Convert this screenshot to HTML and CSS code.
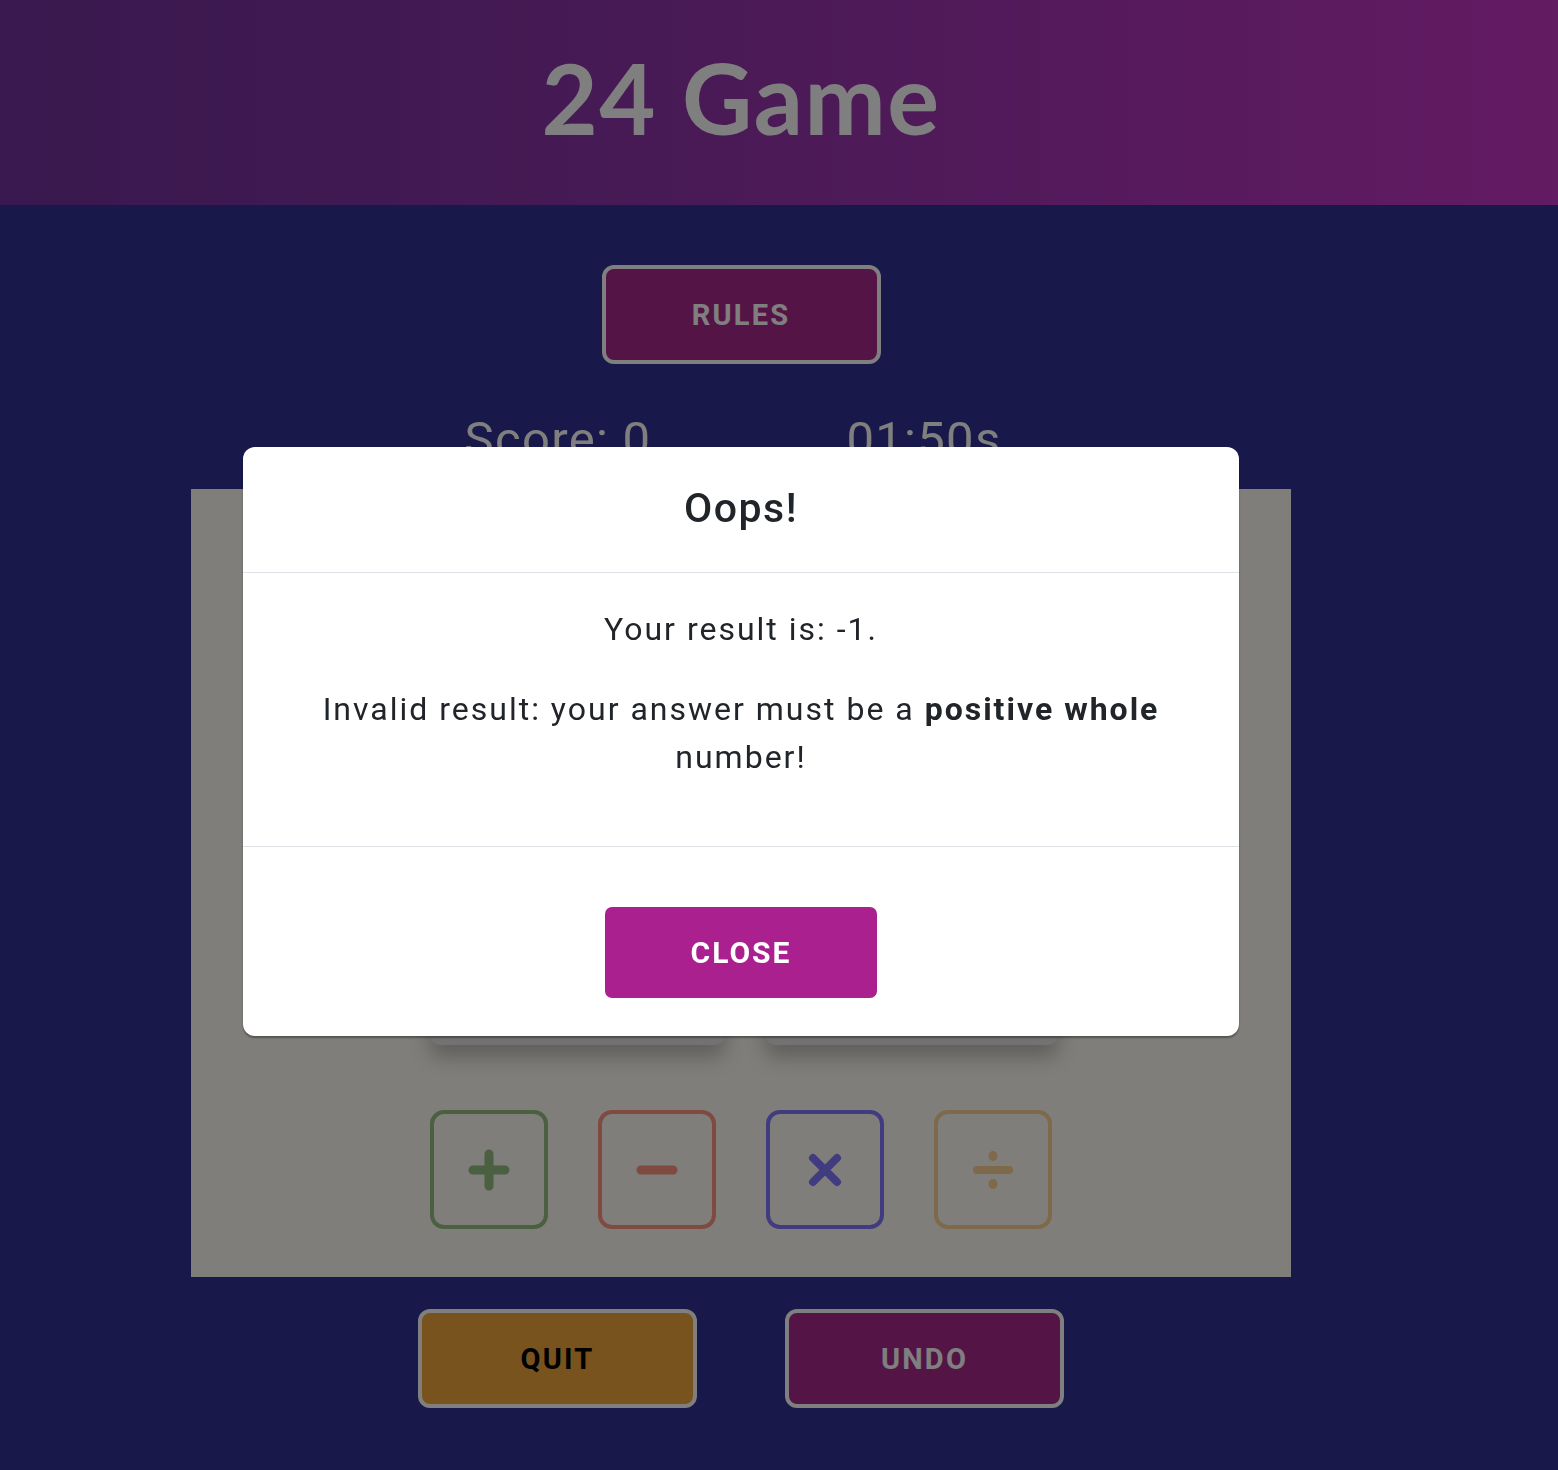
FILE: index.html
```html
<!DOCTYPE html>
<html lang="en">
<head>
<meta charset="utf-8">
<title>24 Game</title>
<link rel="stylesheet" href="styles.css">
</head>
<body>
<header class="site-header">
  <div class="page">
    <h1 class="title">24 Game</h1>
  </div>
</header>
<main class="page main">
  <button class="btn btn-outline btn-rules">RULES</button>
  <div class="stats">
    <div class="stat">Score: 0</div>
    <div class="stat">01:50s</div>
  </div>
  <section class="board">
    <div class="cards">
      <div class="card"></div>
      <div class="card"></div>
      <div class="card"></div>
      <div class="card"></div>
    </div>
    <div class="ops">
      <button class="op op-plus" aria-label="add">
        <svg width="44" height="44" viewBox="0 0 44 44"><path d="M22 6V38M6 22H38" stroke="currentColor" stroke-width="9" stroke-linecap="round"/></svg>
      </button>
      <button class="op op-minus" aria-label="subtract">
        <svg width="44" height="44" viewBox="0 0 44 44"><path d="M6 22H38" stroke="currentColor" stroke-width="9" stroke-linecap="round"/></svg>
      </button>
      <button class="op op-times" aria-label="multiply">
        <svg width="44" height="44" viewBox="0 0 44 44"><path d="M10 10L34 34M34 10L10 34" stroke="currentColor" stroke-width="8" stroke-linecap="round"/></svg>
      </button>
      <button class="op op-div" aria-label="divide">
        <svg width="44" height="44" viewBox="0 0 44 44"><path d="M6 22H38" stroke="currentColor" stroke-width="8" stroke-linecap="round"/><ellipse cx="22" cy="8" rx="4.5" ry="5" fill="currentColor"/><ellipse cx="22" cy="36" rx="4.5" ry="5" fill="currentColor"/></svg>
      </button>
    </div>
  </section>
  <div class="actions">
    <button class="btn btn-outline btn-quit">QUIT</button>
    <button class="btn btn-outline btn-undo">UNDO</button>
  </div>
</main>

<div class="backdrop"></div>
<div class="modal" role="dialog">
  <div class="modal-header"><h2 class="modal-title">Oops!</h2></div>
  <div class="modal-body">
    <p>Your result is: -1.</p>
    <p>Invalid result: your answer must be a <strong>positive whole</strong> number!</p>
  </div>
  <div class="modal-footer">
    <button class="btn-close">CLOSE</button>
  </div>
</div>
</body>
</html>
```
FILE: styles.css
```css
* { box-sizing: border-box; }
html, body { margin: 0; padding: 0; }
body {
  background: #303094;
  font-family: Roboto, "Liberation Sans", sans-serif;
  min-height: 1470px;
  overflow: hidden;
}
.page { width: 1482px; }
.site-header {
  height: 205px;
  background: linear-gradient(90deg, #72329e 0%, #8a34a8 35%, #c636c4 100%);
}
.site-header .page {
  height: 100%;
  display: flex;
  align-items: center;
  justify-content: center;
}
.title {
  margin: 0;
  font-family: Lato, "Open Sans", sans-serif;
  font-weight: 700;
  font-size: 97px;
  color: #fff;
  letter-spacing: 1.5px;
  line-height: 1;
  margin-top: -10px;
}
.main {
  display: flex;
  flex-direction: column;
  align-items: center;
  padding-top: 60px;
}
.btn {
  font-family: Roboto, "Liberation Sans", sans-serif;
  font-weight: 700;
  font-size: 29px;
  letter-spacing: 2.2px;
  cursor: pointer;
}
.btn-outline {
  width: 279px;
  height: 99px;
  border: 4px solid #fff;
  border-radius: 12px;
  background: #aa288c;
  color: #fff;
  padding: 0;
}
.stats {
  display: grid;
  grid-template-columns: 366px 366px;
  margin-top: 44px;
  height: 81px;
}
.stat {
  text-align: center;
  color: #fff;
  font-size: 49px;
  line-height: 64px;
  letter-spacing: 1.3px;
}
.board {
  width: 1100px;
  height: 788px;
  background: #fefcf4;
  display: flex;
  flex-direction: column;
  align-items: center;
  padding-top: 50px;
}
.cards {
  display: grid;
  grid-template-columns: 295px 293px;
  grid-auto-rows: 233px;
  gap: 40px;
  margin-left: 6px;
}
.card {
  background: #e4e4e4;
  border-radius: 10px;
  box-shadow: 0 12px 20px rgba(0,0,0,0.25);
}
.ops {
  display: flex;
  gap: 50px;
  margin-top: 65px;
}
.op {
  width: 118px;
  height: 119px;
  border: 4px solid;
  border-radius: 14px;
  background: transparent;
  display: flex;
  align-items: center;
  justify-content: center;
  padding: 0;
}
.op-plus { border-color: #96be82; color: #96be82; }
.op-minus { border-color: #ff9682; color: #ff9682; }
.op-times { border-color: #8278ff; color: #8278ff; }
.op-div { border-color: #ffd296; color: #ffd296; }
.actions {
  display: flex;
  gap: 88px;
  margin-top: 32px;
}
.btn-quit { background: #f0a63c; color: #000; }
.btn-undo { background: #aa288c; }

.backdrop {
  position: fixed;
  inset: 0;
  background: rgba(0,0,0,0.5);
}
.modal {
  position: fixed;
  top: 447px;
  left: 243px;
  width: 996px;
  height: 589px;
  background: #fff;
  border-radius: 12px;
  box-shadow: 0 2px 2px rgba(0,0,0,0.35);
  display: flex;
  flex-direction: column;
  color: #212529;
}
.modal-header {
  height: 126px;
  border-bottom: 1px solid #dee2e6;
  display: flex;
  align-items: center;
  justify-content: center;
}
.modal-title {
  margin: 0;
  font-size: 41px;
  font-weight: 500;
  letter-spacing: 1.5px;
  line-height: 1;
  margin-top: -2px;
}
.modal-body {
  padding: 32px 32px 33px;
  text-align: center;
  font-size: 32px;
  line-height: 48px;
  letter-spacing: 2px;
  border-bottom: 1px solid #dee2e6;
}
.modal-body p { margin: 0 0 32px; }
.modal-body strong { font-weight: 700; }
.modal-footer {
  flex: 1;
  display: flex;
  justify-content: center;
  padding-top: 60px;
}
.btn-close {
  width: 272px;
  height: 91px;
  border: 0;
  border-radius: 7px;
  background: #aa208e;
  color: #fff;
  font-family: Roboto, "Liberation Sans", sans-serif;
  font-weight: 700;
  font-size: 30px;
  letter-spacing: 2px;
  padding: 0;
}
```
